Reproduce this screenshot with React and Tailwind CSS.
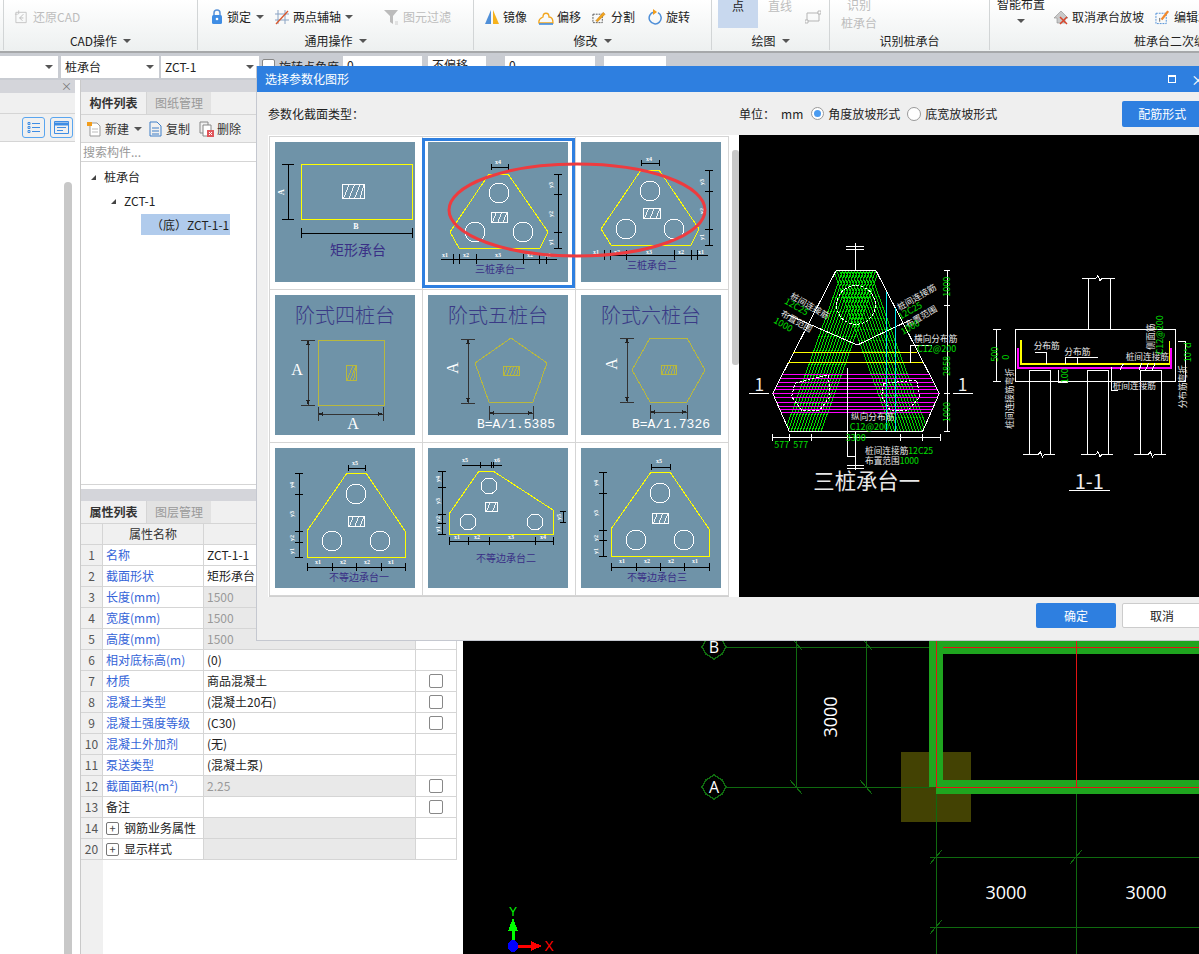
import React from "react";

const CJK = "'Noto Sans CJK SC','Liberation Sans',sans-serif";

const Arrow = ({ className = "" }) => (
    <span className={`inline-block w-0 h-0 border-x-[4px] border-x-transparent border-t-[4px] border-t-[#555] ${className}`} />
);

function Group({ w, pl = 0, label, arrow = true, children, border = true }) {
    return (
        <div className={`shrink-0 h-[50px] flex flex-col ${border ? "border-r border-[#d2d5d6]" : ""}`} style={{ width: w }}>
            <div className="h-[34px] flex items-center" style={{ paddingLeft: pl }}>
                {children}
            </div>
            <div className="h-[14px] flex items-center justify-center gap-[6px] text-[12px] leading-[14px] text-[#222]">
                <span>{label}</span>
                {arrow && <Arrow />}
            </div>
        </div>
    );
}

const Svg16 = ({ children, w = 16 }) => (
    <svg width={w} height="16" viewBox="0 0 16 16" fill="none" className="shrink-0">
        {children}
    </svg>
);

const RibbonItem = ({ icon, text, arrow, gray, gap = "gap-[3px]", className = "" }) => (
    <div className={`flex items-center ${gap} text-[12px] ${gray ? "text-[#bdbdbd]" : "text-[#222]"} ${className}`}>
        {icon}
        <span className="whitespace-nowrap">{text}</span>
        {arrow && <Arrow className="ml-[1px]" />}
    </div>
);

function Ribbon() {
    return (
        <div className="h-[53px] shrink-0 flex overflow-hidden border-b-[2px] border-[#a6a8aa] bg-gradient-to-b from-white to-[#edf0f0]">
            <div className="w-[4px] shrink-0 border-r border-[#d2d5d6] h-[50px]" />
            <Group w={194} pl={10} label="CAD操作">
                <RibbonItem
                    gray
                    gap="gap-[4px]"
                    text="还原CAD"
                    icon={
                        <Svg16 w={15}>
                            <path d="M2 3h11v11H2zM5 1v4M1 5h3" stroke="#c4c4c4" strokeWidth="1" />
                            <path d="M10 5 6 9l3 3M6 9h4" stroke="#bbb" strokeWidth="1" />
                        </Svg16>
                    }
                />
            </Group>
            <Group w={276} pl={13} label="通用操作">
                <RibbonItem
                    text="锁定"
                    arrow
                    gap="gap-[4px]"
                    icon={
                        <svg width="12" height="16" viewBox="0 0 12 16" fill="none">
                            <path d="M3 7V4a3 3 0 0 1 6 0v3" stroke="#5b93d8" strokeWidth="1.5" />
                            <rect x="1" y="6" width="10" height="9" rx="1.5" fill="#3f8de4" />
                            <circle cx="6" cy="10" r="1.3" fill="#fff" />
                        </svg>
                    }
                />
                <RibbonItem
                    text="两点辅轴"
                    arrow
                    className="ml-[10px]"
                    icon={
                        <Svg16>
                            <path d="M4 1v14M11 1v14M1 5h14M1 11h14" stroke="#8aa3c4" strokeWidth="1" />
                            <path d="M2 15 14 2" stroke="#d9572b" strokeWidth="1.3" />
                        </Svg16>
                    }
                />
                <RibbonItem
                    gray
                    text="图元过滤"
                    className="ml-[31px]"
                    icon={
                        <Svg16>
                            <path d="M0 1h14L9 7v8L6 13V7z" fill="#bcbcbc" />
                            <path d="M11 13h3M11 15h3" stroke="#ccc" />
                        </Svg16>
                    }
                />
            </Group>
            <Group w={238} pl={10} label="修改">
                <RibbonItem
                    text="镜像"
                    icon={
                        <Svg16>
                            <path d="M7 1v14H1z" fill="#4f8fd8" />
                            <path d="M9 1v14h6z" fill="#f6b21b" />
                        </Svg16>
                    }
                />
                <RibbonItem
                    text="偏移"
                    className="ml-[11px]"
                    icon={
                        <Svg16>
                            <path d="M1 14c-1-4 2-5 4-6 0-5 6-5 6 0 2 0 4 2 4 6z" stroke="#f2a51c" strokeWidth="1.3" />
                            <path d="M1 15h14" stroke="#3f8de4" strokeWidth="1.6" />
                        </Svg16>
                    }
                />
                <RibbonItem
                    text="分割"
                    gap="gap-[4px]"
                    className="ml-[11px]"
                    icon={
                        <Svg16 w={15}>
                            <path d="M1 5h10v9H1z" stroke="#555" strokeDasharray="2 1" />
                            <path d="m4 12 8-9 2 2-8 8z" fill="#f2a51c" stroke="#b9731a" strokeWidth=".5" />
                        </Svg16>
                    }
                />
                <RibbonItem
                    text="旋转"
                    className="ml-[12px]"
                    icon={
                        <Svg16>
                            <path d="M7 3a6 6 0 1 0 4 .6" stroke="#4f8fd8" strokeWidth="1.5" />
                            <path d="M6 0v6l4-3z" fill="#f29d1c" />
                        </Svg16>
                    }
                />
            </Group>
            <Group w={118} pl={6} label="绘图">
                <div className="self-start w-[40px] h-[28px] bg-[#c8d8ee] text-[12px] text-[#222] text-center leading-[12px]">点</div>
                <div className="self-start ml-[10px] text-[12px] text-[#bdbdbd] leading-[12px] whitespace-nowrap">直线</div>
                <svg width="16" height="14" viewBox="0 0 16 14" fill="none" className="ml-[13px]">
                    <path d="M2 3h12v8H2z" stroke="#b5b5b5" />
                    <path d="M0 10h3v3H0zM13 1h3v3h-3z" fill="#fff" stroke="#aaa" strokeWidth=".8" />
                </svg>
            </Group>
            <Group w={160} pl={11} label="识别桩承台" arrow={false}>
                <div className="w-[36px] -mt-[6px] text-[12px] leading-[18px] text-[#bdbdbd] text-center">
                    <div>识别</div>
                    <div>桩承台</div>
                </div>
            </Group>
            <Group w={372} pl={6} label="桩承台二次编辑" arrow={false} border={false}>
                <div className="-mt-[16px] w-[50px] flex flex-col items-center text-[12px] leading-[16px] text-[#222]">
                    <span className="whitespace-nowrap">智能布置</span>
                    <Arrow className="mt-[7px]" />
                </div>
                <RibbonItem
                    text="取消承台放坡"
                    className="ml-[7px]"
                    gap="gap-[3px]"
                    icon={
                        <Svg16>
                            <path d="M8 2 1 9h3v5h8V9h3z" fill="#c9c9c9" stroke="#8d8d8d" strokeWidth=".6" />
                            <path d="m7 8 7 7M14 8l-7 7" stroke="#d9452b" strokeWidth="1.5" />
                        </Svg16>
                    }
                />
                <RibbonItem
                    text="编辑承台"
                    className="ml-[11px]"
                    gap="gap-[4px]"
                    icon={
                        <Svg16 w={15}>
                            <path d="M1 4h11v11H1z" stroke="#4f8fd8" strokeDasharray="2 1" />
                            <path d="m6 10 7-9 2 1.500-7 9z" fill="#f2892b" />
                            <path d="M5 9v4" stroke="#666" />
                        </Svg16>
                    }
                />
            </Group>
        </div>
    );
}

const Combo = ({ w, text, ml = 0 }) => (
    <div className="h-[22px] bg-white flex items-center justify-between pl-[4px] pr-[5px] text-[12px] text-[#222] shrink-0" style={{ width: w, marginLeft: ml }}>
        <span>{text}</span>
        <Arrow />
    </div>
);

function Toolbar() {
    return (
        <div className="h-[27px] shrink-0 bg-[#c9ccd2] flex pt-[3px] text-[12px] text-[#222]">
            <Combo w={58} text="" />
            <Combo w={98} ml={3} text="桩承台" />
            <Combo w={98} ml={2} text="ZCT-1" />
            <span className="ml-[3px] mt-[3px] w-[13px] h-[13px] bg-white border border-[#888] rounded-[2px]" />
            <span className="ml-[4px] w-[62px] leading-[22px] whitespace-nowrap">旋转点角度</span>
            <div className="ml-[2px] w-[79px] h-[22px] bg-white pl-[4px]">0</div>
            <div className="ml-[6px] w-[58px] h-[22px] bg-white pl-[4px]">不偏移</div>
            <div className="ml-[19px] w-[90px] h-[22px] bg-white pl-[4px]">0</div>
            <div className="ml-[9px] w-[62px] h-[22px] bg-white" />
        </div>
    );
}

function PanelTabs({ first, second }) {
    return (
        <>
            <div className="h-[12px] bg-[#d4d5da]" />
            <div className="h-[23px] flex bg-[#f0f0f0] border-b border-[#d5d5d5] text-[12px] leading-[22px]">
                <div className="w-[65px] text-center font-bold text-[#333] bg-[#f0f0f0]">{first}</div>
                <div className="w-[65px] text-center text-[#999] bg-[#e2e2e2] border-l border-[#d5d5d5]">{second}</div>
            </div>
        </>
    );
}

function LeftPanel() {
    return (
        <div className="w-[75px] shrink-0 flex flex-col bg-white">
            <div className="h-[13px] bg-[#d4d5da] flex items-center justify-end pr-[3px] text-[11px] leading-[13px] text-[#777]">×</div>
            <div className="h-[21px] bg-[#f0f0f0] border-b border-[#d5d5d5]" />
            <div className="h-[28px] bg-[#f0f0f0] border-b border-[#d5d5d5] flex items-center justify-end gap-[5px] pr-[2px]">
                <div className="w-[23px] h-[21px] rounded-[3px] border border-[#59a5ef] flex items-center justify-center">
                    <svg width="13" height="13" viewBox="0 0 13 13" fill="none" stroke="#3f8de4">
                        <path d="M1 1.500h2v2H1zM1 5.500h2v2H1zM1 9.500h2v2H1zM5 2.500h8M5 6.500h8M5 10.500h8" />
                    </svg>
                </div>
                <div className="w-[23px] h-[21px] rounded-[3px] border border-[#59a5ef] flex items-center justify-center">
                    <svg width="15" height="13" viewBox="0 0 15 13" fill="none" stroke="#3f8de4">
                        <path d="M.5.500h14v12H.500zM3 6.500h9M3 9.500h6" />
                        <path d="M1 2h13v2H1z" fill="#3f8de4" />
                    </svg>
                </div>
            </div>
            <div className="flex-1 flex justify-end pr-[3px] pt-[40px]">
                <div className="w-[8px] rounded-t-[4px] bg-[#c8c8c8]" />
            </div>
        </div>
    );
}

function ComponentPanel() {
    return (
        <div className="h-[405px] flex flex-col bg-white shrink-0 border-b border-[#d5d5d5]">
            <PanelTabs first="构件列表" second="图纸管理" />
            <div className="h-[28px] bg-[#f0f0f0] border-b border-[#d5d5d5] flex items-center pl-[6px] text-[12px] text-[#333]">
                <svg width="15" height="16" viewBox="0 0 15 16" fill="none">
                    <path d="M3 2h7l3 3v10H3z" fill="#fff" stroke="#999" />
                    <path d="M5 8h6M5 11h6" stroke="#bbb" />
                    <path d="M0 1h5v4H0z" fill="#f29d1c" />
                </svg>
                <span className="ml-[3px]">新建</span>
                <Arrow className="ml-[5px]" />
                <svg width="13" height="16" viewBox="0 0 13 16" fill="none" className="ml-[7px]" stroke="#3f7fc8">
                    <path d="M1 1h7l4 4v10H1zM3 7h7M3 10h7M3 13h7" />
                </svg>
                <span className="ml-[4px]">复制</span>
                <svg width="15" height="16" viewBox="0 0 15 16" fill="none" className="ml-[9px]">
                    <path d="M1 1h8v11H1z" stroke="#888" />
                    <path d="M4 4h8v11H4z" fill="#fff" stroke="#888" />
                    <path d="M8 9h7v7H8z" fill="#e0565b" />
                    <path d="m10 11 3 3m0-3-3 3" stroke="#fff" />
                </svg>
                <span className="ml-[3px]">删除</span>
            </div>
            <div className="h-[19px] border-b border-[#d5d5d5] pl-[2px] text-[12px] leading-[18px] text-[#999]">搜索构件...</div>
            <div className="pt-[3px] text-[12px] leading-[24px] text-[#222]">
                <div className="flex items-center pl-[10px] h-[24px]">
                    <span className="w-0 h-0 border-l-[5px] border-l-transparent border-b-[5px] border-b-[#444]" />
                    <span className="ml-[8px]">桩承台</span>
                </div>
                <div className="flex items-center pl-[30px] h-[24px]">
                    <span className="w-0 h-0 border-l-[5px] border-l-transparent border-b-[5px] border-b-[#444]" />
                    <span className="ml-[8px]">ZCT-1</span>
                </div>
                <div className="ml-[60px] w-[89px] h-[21px] mt-[1px] bg-[#b0cbec] leading-[21px] pl-[10px] whitespace-nowrap">（底）ZCT-1-1</div>
            </div>
        </div>
    );
}

const rows = [
    { n: 1, name: "名称", val: "ZCT-1-1" },
    { n: 2, name: "截面形状", val: "矩形承台" },
    { n: 3, name: "长度(mm)", val: "1500", dis: true },
    { n: 4, name: "宽度(mm)", val: "1500", dis: true },
    { n: 5, name: "高度(mm)", val: "1500", dis: true },
    { n: 6, name: "相对底标高(m)", val: "(0)" },
    { n: 7, name: "材质", val: "商品混凝土", chk: true },
    { n: 8, name: "混凝土类型", val: "(混凝土20石)", chk: true },
    { n: 9, name: "混凝土强度等级", val: "(C30)", chk: true },
    { n: 10, name: "混凝土外加剂", val: "(无)" },
    { n: 11, name: "泵送类型", val: "(混凝土泵)" },
    { n: 12, name: "截面面积(m²)", val: "2.25", dis: true, chk: true },
    { n: 13, name: "备注", val: "", black: true, chk: true },
    { n: 14, name: "钢筋业务属性", val: "", group: true },
    { n: 20, name: "显示样式", val: "", group: true },
];

function PropertyPanel() {
    return (
        <div className="mt-[4px] flex-1 flex flex-col bg-white overflow-hidden">
            <PanelTabs first="属性列表" second="图层管理" />
            <div className="flex h-[21px] shrink-0 text-[12px] text-[#333] leading-[20px] border-b border-[#d5d5d5] bg-[#f0f0f0]">
                <div className="w-[22px] border-r border-[#d5d5d5]" />
                <div className="w-[101px] border-r border-[#d5d5d5] text-center">属性名称</div>
                <div className="w-[212px] border-r border-[#d5d5d5]" />
                <div className="w-[41px] border-r border-[#d5d5d5]" />
            </div>
            {rows.map((r) => (
                <div key={r.n} className="flex h-[21px] text-[12px] leading-[20px] border-b border-[#d5d5d5] shrink-0">
                    <div className="w-[22px] border-r border-[#d5d5d5] bg-[#f0f0f0] text-[#555] text-center">{r.n}</div>
                    <div className={`w-[101px] border-r border-[#d5d5d5] whitespace-nowrap flex items-center pl-[3px] ${r.group || r.black ? "text-[#222]" : "text-[#3464d8]"}`}>
                        {r.group && (
                            <span className="w-[13px] h-[13px] mr-[5px] rounded-[2px] border border-[#777] text-[11px] leading-[11px] text-center text-[#444]">+</span>
                        )}
                        {r.name}
                    </div>
                    <div className={`w-[212px] border-r border-[#d5d5d5] pl-[3px] whitespace-nowrap ${r.dis ? "bg-[#e9e9e9] text-[#999]" : r.group ? "bg-[#e9e9e9]" : "text-[#222]"}`}>{r.val}</div>
                    <div className="w-[41px] border-r border-[#d5d5d5] flex items-center justify-center">
                        {r.chk && <span className="w-[14px] h-[14px] rounded-[2px] border border-[#888] bg-white" />}
                    </div>
                </div>
            ))}
            <div className="flex-1 flex">
                <div className="w-[22px] bg-[#f0f0f0]" />
            </div>
        </div>
    );
}

function Canvas() {
    const g = "#0f6a0f";
    return (
        <div className="flex-1 bg-black overflow-hidden">
            <svg width="736" height="874" viewBox="463 80 736 874" fill="none" className="block" shapeRendering="crispEdges">
                <rect x="901" y="752" width="70" height="70" fill="#434203" />
                <path d="M726 647H930M726 787H930M796 640V787M866 640V787M936 787V954M1076 794V954M930 857H1199M930 927H1199" stroke={g} strokeWidth="1" />
                <path d="M790 780l12 14M860 780l12 14M790 636l12 14M860 636l12 14M930 864l12-14M1070 864l12-14M930 934l12-14" stroke={g} strokeWidth="1" />
                <path d="M929 640h14v140h256v14H936v-7h-7zM943 640h256v14H943z" fill="#1fa51f" />
                <path d="M936 640V787H1199M943 647H1199M1076 640V787" stroke="#e21414" strokeWidth="1" />
                <polygon points="714,635 722,640 726,647 722,654 714,659 706,654 702,647 706,640" stroke={g} strokeWidth="1.500" fill="#000" />
                <polygon points="714,775 722,780 726,787 722,794 714,799 706,794 702,787 706,780" stroke={g} strokeWidth="1.500" fill="#000" />
                <text x="714" y="653" fill="#fff" fontSize="16" textAnchor="middle" fontFamily="Open Sans">B</text>
                <text x="714" y="793" fill="#fff" fontSize="16" textAnchor="middle" fontFamily="Open Sans">A</text>
                <text transform="translate(837 717) rotate(-90)" fill="#fff" fontSize="18" textAnchor="middle" fontFamily="Open Sans">3000</text>
                <text x="1006" y="899" fill="#fff" fontSize="18" textAnchor="middle" fontFamily="Open Sans">3000</text>
                <text x="1146" y="899" fill="#fff" fontSize="18" textAnchor="middle" fontFamily="Open Sans">3000</text>
                <path d="M513 946V926" stroke="#00ff00" strokeWidth="3" />
                <path d="M513 918l-5 13h10z" fill="#00ff00" />
                <path d="M513 946h18" stroke="#ff0000" strokeWidth="3" />
                <path d="M542 946l-11-5v10z" fill="#ff0000" />
                <ellipse cx="513" cy="946" rx="5" ry="6" fill="#0000ff" />
                <text x="513" y="916" fill="#00ff00" fontSize="12" textAnchor="middle" fontFamily="Liberation Sans">Y</text>
                <text x="549" y="951" fill="#ff0000" fontSize="14" textAnchor="middle" fontFamily="Liberation Sans">X</text>
            </svg>
        </div>
    );
}

function Hatch({ x, y, w, h, color = "#fff", sw = 1, step = 5 }) {
    const n = Math.max(2, Math.round(w / step));
    const lines = [];
    for (let i = 0; i < n; i++) {
        const a = x + (w * (i + 0.3)) / n;
        lines.push(`M${a} ${y + h}L${Math.min(a + h * 0.4, x + w)} ${y}`);
    }
    return (
        <>
            <rect x={x} y={y} width={w} height={h} stroke={color} strokeWidth={sw} fill="none" />
            <path d={lines.join("")} stroke={color} strokeWidth={sw * 0.9} />
        </>
    );
}

const hdim = (y, xs, t = 4) =>
    `M${Math.min(...xs)} ${y}H${Math.max(...xs)}` + xs.map((x) => `M${x} ${y - t}V${y + t}`).join("");
const vdim = (x, ys, t = 4) =>
    `M${x} ${Math.min(...ys)}V${Math.max(...ys)}` + ys.map((y) => `M${x - t} ${y}H${x + t}`).join("");

function CapThumb({ poly, circles, r = 10, hatch, dims, labels, caption }) {
    return (
        <svg width="140" height="140" viewBox="0 0 140 140" fill="none" className="block bg-[#6f93a8]" shapeRendering="crispEdges">
            <polygon points={poly} stroke="#ffff00" strokeWidth="1" />
            {circles.map(([cx, cy], i) => (
                <circle key={i} cx={cx} cy={cy} r={r} stroke="#fff" strokeWidth="1" />
            ))}
            <Hatch {...hatch} />
            <path d={dims} stroke="#000" strokeWidth="1" />
            {labels.map(([t, x, y, rot], i) => (
                <text
                    key={i}
                    transform={`translate(${x} ${y})${rot ? " rotate(-90)" : ""}`}
                    fill="#fff"
                    fontSize="6"
                    fontWeight="700"
                    textAnchor="middle"
                    fontFamily="Liberation Serif"
                >
                    {t}
                </text>
            ))}
            <text x={caption[1]} y={caption[2]} fill="#3a2f86" fontSize={caption[3]} textAnchor="middle" fontFamily="Noto Sans CJK SC">
                {caption[0]}
            </text>
        </svg>
    );
}

function RectThumb() {
    return (
        <svg width="140" height="140" viewBox="0 0 140 140" fill="none" className="block bg-[#6f93a8]" shapeRendering="crispEdges">
            <rect x="26" y="22" width="111" height="55" stroke="#ffff00" strokeWidth="1" />
            <Hatch x={67} y={42} w={22} h={14} />
            <path d={vdim(13, [22, 77], 6) + hdim(91, [26, 137], 5)} stroke="#000" strokeWidth="1" />
            <text transform="translate(9 50) rotate(-90)" fill="#fff" fontSize="8" fontWeight="700" textAnchor="middle" fontFamily="Liberation Serif">A</text>
            <text x="81" y="87" fill="#fff" fontSize="8" fontWeight="700" textAnchor="middle" fontFamily="Liberation Serif">B</text>
            <text x="83" y="113" fill="#3a2f86" fontSize="14" textAnchor="middle" fontFamily="Noto Sans CJK SC">矩形承台</text>
        </svg>
    );
}

function StepThumb({ title, shape, hatch, left, bottom, aLeft, rotA, formula, aBottom }) {
    const c = "#b8b83e";
    return (
        <svg width="140" height="140" viewBox="0 0 140 140" fill="none" className="block bg-[#6f93a8]" shapeRendering="crispEdges">
            <text x="70" y="28" fill="#3a3a86" fontSize="20" fontWeight="300" textAnchor="middle" fontFamily="Noto Sans CJK SC">{title}</text>
            <polygon points={shape} stroke={c} strokeWidth="1" />
            <Hatch {...hatch} color={c} step={3} />
            <path d={vdim(left[0], [left[1], left[2]], 7) + hdim(bottom[0], [bottom[1], bottom[2]], 7)} stroke="#333" strokeWidth="1" />
            <path d={`M${left[0]} ${left[1]}l-2 5h4zM${left[0]} ${left[2]}l-2 -5h4zM${bottom[1]} ${bottom[0]}l5 -2v4zM${bottom[2]} ${bottom[0]}l-5 -2v4z`} fill="#222" />
            <text transform={`translate(${aLeft[0]} ${aLeft[1]})${rotA ? " rotate(-90)" : ""}`} fill="#fff" fontSize="16" textAnchor="middle" fontFamily="Liberation Serif">A</text>
            {aBottom && <text x={aBottom[0]} y={aBottom[1]} fill="#fff" fontSize="16" textAnchor="middle" fontFamily="Liberation Serif">A</text>}
            {formula && <text x={formula[1]} y="133" fill="#fff" fontSize="13" fontFamily="Liberation Mono">{formula[0]}</text>}
        </svg>
    );
}

const thumbs = [
    <RectThumb />,
    <CapThumb
        poly="61,32 80,32 120,90 112,106 31,106 22,90"
        circles={[[71, 51], [47, 90], [95, 90]]}
        hatch={{ x: 63, y: 70, w: 16, h: 10 }}
        dims={hdim(25, [63, 80], 3) + vdim(130, [32, 52, 90, 106]) + "M13 117H129" + [25, 31, 48, 95, 111, 118].map((x) => `M${x} 112V122`).join("")}
        labels={[["x4", 70, 22], ["x1", 17, 115], ["x2", 38, 115], ["x3", 70, 115], ["x2", 102, 115], ["x1", 120, 115], ["y3", 125, 43, 1], ["y2", 125, 72, 1], ["y1", 125, 100, 1]]}
        caption={["三桩承台一", 72, 131, 10]}
    />,
    <CapThumb
        poly="60,28 78,28 118,87 110,103 30,103 20,87"
        circles={[[69, 49], [45, 87], [93, 87]]}
        hatch={{ x: 62, y: 66, w: 17, h: 10 }}
        dims={hdim(21, [60, 78], 3) + vdim(128, [28, 49, 87, 103]) + "M9 113H127" + [23, 29, 45, 93, 110, 116].map((x) => `M${x} 108V118`).join("")}
        labels={[["x4", 68, 19], ["x1", 15, 112], ["x2", 36, 112], ["x3", 68, 112], ["x2", 100, 112], ["x1", 120, 112], ["y3", 123, 40, 1], ["y2", 123, 69, 1], ["y1", 123, 95, 1]]}
        caption={["三桩承台二", 71, 127, 10]}
    />,
    <StepThumb
        title="阶式四桩台"
        shape="43,45 109,45 109,110 43,110"
        hatch={{ x: 71, y: 70, w: 10, h: 15 }}
        left={[33, 45, 110]}
        bottom={[119, 43, 108]}
        aLeft={[22, 80]}
        aBottom={[78, 134]}
    />,
    <StepThumb
        title="阶式五桩台"
        shape="83,43 119,68 105,107 61,107 47,68"
        hatch={{ x: 75, y: 71, w: 16, h: 9 }}
        left={[40, 44, 108]}
        bottom={[118, 61, 105]}
        aLeft={[30, 73]}
        rotA
        formula={["B=A/1.5385", 49]}
    />,
    <StepThumb
        title="阶式六桩台"
        shape="69,43 106,43 124,75 106,107 69,107 51,75"
        hatch={{ x: 80, y: 70, w: 15, h: 9 }}
        left={[46, 43, 107]}
        bottom={[117, 69, 106]}
        aLeft={[36, 69]}
        rotA
        formula={["B=A/1.7326", 51]}
    />,
    <CapThumb
        poly="72,25 91,25 130,83 130,109 32,109 32,83"
        circles={[[81, 46], [57, 93], [105, 93]]}
        hatch={{ x: 73, y: 68, w: 16, h: 10 }}
        dims={hdim(20, [73, 90], 3) + vdim(24, [25, 46, 83, 94, 109]) + hdim(119, [32, 57, 81, 106, 130])}
        labels={[["x5", 80, 17], ["y4", 19, 37, 1], ["y3", 19, 66, 1], ["y2", 19, 90, 1], ["y1", 19, 103, 1], ["x1", 43, 116], ["x2", 68, 116], ["x2", 92, 116], ["x1", 116, 116]]}
        caption={["不等边承台一", 84, 133, 10]}
    />,
    <CapThumb
        r={8}
        poly="51,23 65,23 125,62 125,86 21,86 21,66"
        circles={[[61, 38], [40, 74], [107, 74]]}
        hatch={{ x: 57, y: 54, w: 12, h: 9 }}
        dims={"M34 17H74" + [52, 63, 65].map((x) => `M${x} 14V20`).join("") + vdim(14, [23, 39, 66, 75, 86]) + hdim(93, [21, 40, 61, 107, 125]) + vdim(135, [63, 74], 3)}
        labels={[["x5", 37, 14], ["x6", 69, 14], ["y4", 12, 31, 1], ["y3", 12, 53, 1], ["y2", 12, 71, 1], ["y1", 12, 81, 1], ["x1", 29, 91], ["x2", 49, 91], ["x3", 83, 91], ["x4", 115, 91], ["y5", 133, 69, 1]]}
        caption={["不等边承台二", 78, 114, 10]}
    />,
    <CapThumb
        poly="70,24 89,24 128,81 128,108 30,108 30,81"
        circles={[[79, 45], [55, 92], [103, 92]]}
        hatch={{ x: 71, y: 65, w: 16, h: 10 }}
        dims={hdim(19, [70, 89], 3) + vdim(22, [24, 45, 82, 92, 108]) + hdim(119, [30, 55, 79, 103, 128])}
        labels={[["x5", 78, 15], ["y4", 17, 35, 1], ["y3", 17, 65, 1], ["y2", 17, 90, 1], ["y1", 17, 103, 1], ["x1", 41, 115], ["x2", 66, 115], ["x2", 90, 115], ["x1", 114, 115]]}
        caption={["不等边承台三", 76, 133, 10]}
    />,
];

function Gallery() {
    return (
        <div className="relative w-[471px] h-[462px] shrink-0 bg-white overflow-hidden flex">
            <div className="w-[460px] h-[461px] mt-[1px] ml-[1px] border-l border-[#d5d5d5] border-b-[2px] border-b-[#d0d0d0] border-t border-t-[#d5d5d5] grid grid-cols-[repeat(3,153px)] grid-rows-[repeat(3,153px)]">
                {thumbs.map((t, i) => (
                    <div key={i} className="relative border-r border-b border-[#d5d5d5] pl-[5px] pt-[5px]">
                        {t}
                        {i === 1 && <div className="absolute left-[-1px] top-[1px] w-[153px] h-[150px] border-[3px] border-[#2e7fe0]" />}
                    </div>
                ))}
            </div>
            <div className="ml-[3px] mt-[15px] w-[7px] h-[215px] rounded-[3px] bg-[#c8c8c8]" />
            <svg width="262" height="98" viewBox="0 0 262 98" fill="none" className="absolute left-[179px] top-[27px]">
                <ellipse cx="130" cy="48" rx="128" ry="46" stroke="#ee3b3f" strokeWidth="3" />
            </svg>
        </div>
    );
}

const CT = ({ x, y, rot, size = 26, fill = "#e8e8e8", children, anchor = "middle" }) => (
    <text transform={`translate(${x} ${y})${rot ? ` rotate(${rot})` : ""}`} fill={fill} fontSize={size} textAnchor={anchor} fontFamily="Noto Sans CJK SC">
        {children}
    </text>
);

// stripes of one pile band, running from the top edge to the bottom edge
const bandLines = (topX, botX, count, step) =>
    Array.from({ length: count }, (_, i) => `M${topX + i * step} 152L${botX + i * step} 634`).join("");

// the preview is drawn at 3 units per pixel: snap a row so its 1px line stays sharp
const snapRow = (y) => Math.round((y + 255) / 3) * 3 - 255 + 1.5;

function Preview() {
    const G = "#00e000";
    const pink = [462, 473, 487, 497, 508, 520, 532, 545, 557, 567, 575];
    return (
        <div className="flex-1 bg-black overflow-hidden">
            <svg width="460" height="462" viewBox="-3 -255 1380 1386" fill="none" className="block" shapeRendering="crispEdges">
                <defs>
                    <clipPath id="hexClip">
                        <polygon points="288,152 408,152 598,520 548,634 148,634 98,520" />
                    </clipPath>
                </defs>
                <g clipPath="url(#hexClip)">
                    <path d={bandLines(308, 135, 13, 9)} stroke="#00e000" strokeWidth="3" />
                    <path d={bandLines(281, 456, 13, 9)} stroke="#00d000" strokeWidth="3" />
                    {pink.map((y) => (
                        <path key={y} d={`M90 ${snapRow(y)}H610`} stroke="#ff00ff" strokeWidth="3" shapeRendering="auto" />
                    ))}
                </g>
                <polygon points="288,152 408,152 598,520 548,634 148,634 98,520" stroke="#fff" strokeWidth="3" />
                <circle cx="348" cy="255" r="58" stroke="#fff" strokeWidth="3" strokeDasharray="8 5" />
                <polygon points="165,490 265,465 270,530 240,570 185,570 155,530" stroke="#fff" strokeWidth="3" strokeDasharray="8 5" />
                <polygon points="430,490 530,480 540,530 505,570 450,570 425,530" stroke="#fff" strokeWidth="3" strokeDasharray="8 5" />
                <path d="M145 285 352 375 510 300" stroke="#fff" strokeWidth="3" />
                <path d="M160 397H530M145 428H550" stroke="#ffff00" strokeWidth="3" />
                <path d="M438 215V634M466 265V634" stroke="#00e5ee" strokeWidth="3" />
                <path d="M347 68V152M318 80H372M318 88H372M347 634V750M322 735H372M322 745H372M322 445V708H347" stroke="#fff" strokeWidth="3" />
                <path d="M622 152V634M612 152H630M612 255H630M612 520H630M612 634H630M96 652H600M96 642V662M148 642V662M215 642V662M480 642V662M548 642V662M600 642V662" stroke="#fff" strokeWidth="3" />
                <path d="M512 375H575M512 375V430M28 520H88M640 520H698" stroke="#fff" strokeWidth="3" />
                <CT x={58} y={512} size={52} fill="#eee">1</CT>
                <CT x={668} y={512} size={52} fill="#eee">1</CT>
                <CT x={205} y={266} rot={30}>桩间连接筋</CT>
                <CT x={165} y={268} rot={30} fill={G} size={27}>12C25</CT>
                <CT x={165} y={312} rot={30}>布置范围</CT>
                <CT x={125} y={322} rot={30} fill={G} size={27}>1000</CT>
                <CT x={535} y={240} rot={-30}>桩间连接筋</CT>
                <CT x={515} y={280} rot={-30} fill={G} size={27}>12C25</CT>
                <CT x={548} y={298} rot={-30}>布置范围</CT>
                <CT x={515} y={330} rot={-30} fill={G} size={27}>1000</CT>
                <CT x={587} y={367}>横向分布筋</CT>
                <CT x={590} y={396} fill={G} size={27}>C12@200</CT>
                <CT x={398} y={601}>纵向分布筋</CT>
                <CT x={388} y={631} fill={G} size={27}>C12@200</CT>
                <CT x={375} y={702} anchor="start">桩间连接筋<tspan fill={G}>12C25</tspan></CT>
                <CT x={375} y={732} anchor="start">布置范围<tspan fill={G}>1000</tspan></CT>
                <CT x={631} y={200} rot={-90} fill={G} size={27}>1000</CT>
                <CT x={631} y={438} rot={-90} fill={G} size={27}>2858</CT>
                <CT x={631} y={576} rot={-90} fill={G} size={27}>1000</CT>
                <CT x={125} y={684} fill={G} size={27}>577</CT>
                <CT x={182} y={684} fill={G} size={27}>577</CT>
                <CT x={347} y={662} fill={G} size={27}>3300</CT>
                <CT x={380} y={808} size={64} fill="#e8e8e8">三桩承台一</CT>

                <path d="M1045 175V328M1110 175V328M1027 175H1068l6-8 6 16 6-8H1125M826 328H1306V485H826zM770 328V485M760 328H782M760 485H782" stroke="#fff" strokeWidth="3" />
                <path d="M868 450H932M868 450V703M932 450V703M1042 450H1106M1042 450V703M1106 450V703M1202 450H1265M1202 450V703M1265 450V703M850 703H895l6-8 6 16 6-8H945M1022 703H1068l6-8 6 16 6-8H1118M1182 703H1225l6-8 6 16 6-8H1278" stroke="#fff" strokeWidth="3" />
                <path d="M835 385V444H1294V385" stroke="#ff00ff" strokeWidth="6" />
                <path d="M842 360V432H1288V362" stroke="#ffff00" strokeWidth="5" />
                <path d="M884 397H920V432M975 412H1074M975 412V432M1012 412V432M1114 440V510H1135M1150 432l-10 18M1205 430l-8 20M1225 430l-8 20M1245 430l-8 20M1315 365H1335V485H1315M955 450V488H985" stroke="#fff" strokeWidth="3" />
                <CT x={920} y={387}>分布筋</CT>
                <CT x={1012} y={406}>分布筋</CT>
                <CT x={1222} y={421}>桩间连接筋</CT>
                <CT x={1183} y={506}>桩间连接筋</CT>
                <CT x={1242} y={350} rot={-90}>侧面筋</CT>
                <CT x={1269} y={345} rot={-90} fill={G} size={27}>C12@200</CT>
                <CT x={1354} y={397} rot={-90} fill={G} size={27}>10*d</CT>
                <CT x={1339} y={500} rot={-90}>分布筋弯折</CT>
                <CT x={819} y={535} rot={-90}>桩间连接筋弯折</CT>
                <CT x={774} y={403} rot={-90} fill={G} size={27}>500</CT>
                <CT x={806} y={412} rot={-90} fill={G} size={27}>0</CT>
                <CT x={984} y={467} rot={-90} fill={G} size={27}>100</CT>
                <CT x={1048} y={806} size={60} fill="#eee">1-1</CT>
                <path d="M988 810H1110" stroke="#fff" strokeWidth="3" />
            </svg>
        </div>
    );
}

function Modal() {
    return (
        <div className="absolute left-[256px] top-[66px] w-[960px] h-[575px] bg-[#efefef] border-b border-l border-[#c5c8d0] flex flex-col">
            <div className="h-[26px] bg-[#2e7fe0] flex items-center pl-[8px] pr-[11px] text-[12px] text-white">
                <span>选择参数化图形</span>
                <span className="ml-auto w-[8px] h-[8px] border border-white border-t-2" />
                <span className="ml-[15px] text-[14px] leading-none">×</span>
            </div>
            <div className="h-[43px] flex items-center pl-[11px] text-[12px] text-[#222] whitespace-nowrap">
                <span className="shrink-0">参数化截面类型：</span>
                <span className="ml-[375px] shrink-0">单位：</span>
                <span className="ml-[6px] shrink-0">mm</span>
                <span className="ml-[8px] shrink-0 w-[13px] h-[13px] rounded-full border border-[#999] bg-white flex items-center justify-center">
                    <span className="w-[7px] h-[7px] rounded-full bg-[#4a9bf0]" />
                </span>
                <span className="ml-[4px] shrink-0">角度放坡形式</span>
                <span className="ml-[7px] shrink-0 w-[14px] h-[14px] rounded-full border border-[#999] bg-white" />
                <span className="ml-[4px] shrink-0">底宽放坡形式</span>
                <div className="ml-[125px] shrink-0 w-[90px] h-[26px] rounded-[2px] bg-[#2e7fe0] text-white text-[12px] leading-[26px] pl-[16px]">配筋形式</div>
            </div>
            <div className="flex h-[462px] shrink-0 pl-[11px]">
                <Gallery />
                <Preview />
            </div>
            <div className="flex-1 flex items-start pt-[6px] pl-[779px] gap-[6px] text-[12px]">
                <div className="w-[80px] h-[25px] rounded-[2px] bg-[#2e7fe0] text-white text-center leading-[25px]">确定</div>
                <div className="w-[80px] h-[25px] rounded-[2px] bg-white border border-[#ccc] text-[#222] text-center leading-[23px]">取消</div>
            </div>
        </div>
    );
}

export default function App() {
    return (
        <div className="relative w-[1199px] h-[954px] overflow-hidden bg-white flex flex-col font-['Noto_Sans_CJK_SC','Liberation_Sans',sans-serif]" style={{ fontFamily: CJK }}>
            <Ribbon />
            <Toolbar />
            <div className="flex-1 flex min-h-0 bg-white">
                <LeftPanel />
                <div className="w-[5px] shrink-0 bg-white" />
                <div className="w-[377px] shrink-0 flex flex-col border-l border-[#c9c9c9]">
                    <ComponentPanel />
                    <PropertyPanel />
                </div>
                <div className="w-[6px] shrink-0 bg-white" />
                <Canvas />
            </div>
            <Modal />
        </div>
    );
}
